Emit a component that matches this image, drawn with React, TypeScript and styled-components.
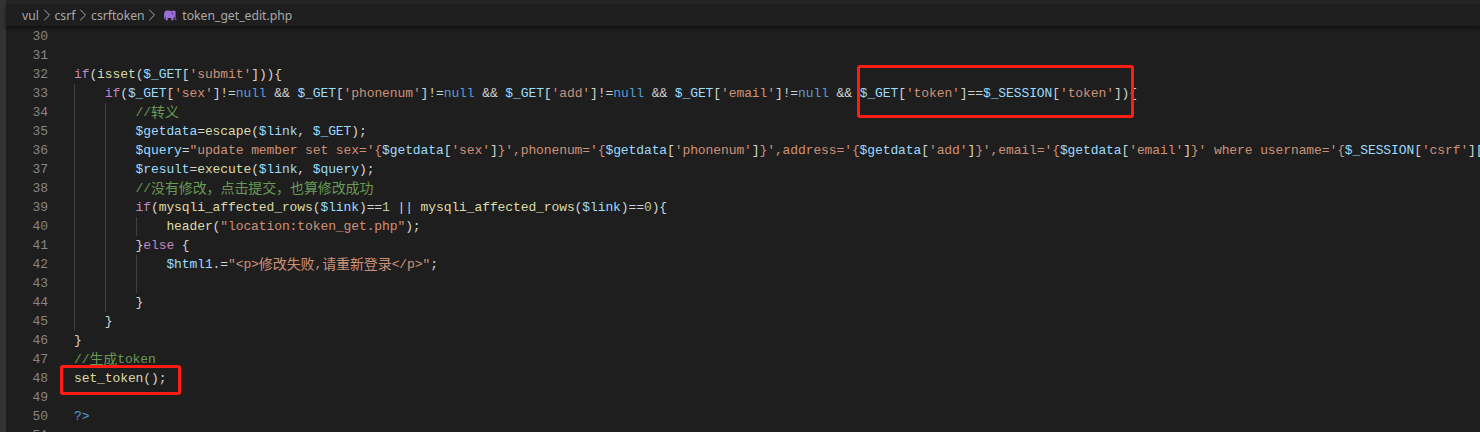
import React from 'react'
import styled, { createGlobalStyle } from 'styled-components'
import { ChevronRight } from 'lucide-react'

type Kind = 'plain' | 'var' | 'str' | 'ctl' | 'fn' | 'kw' | 'num' | 'com'
type Tok = [Kind, string]
type Line = { no: number; indent?: number; toks?: Tok[] }

const COLORS: Record<Kind, string> = {
  plain: '#d4d4d4',
  var: '#9cdcfe',
  str: '#ce9178',
  ctl: '#c586c0',
  fn: '#dcdcaa',
  kw: '#569cd6',
  num: '#b5cea8',
  com: '#6a9955',
}

const get = (key: string): Tok[] => [
  ['var', '$_GET'],
  ['plain', '['],
  ['str', `'${key}'`],
  ['plain', ']'],
]

const notNull = (key: string): Tok[] => [
  ...get(key),
  ['plain', '!='],
  ['kw', 'null'],
  ['plain', ' && '],
]

const interp = (key: string): Tok[] => [
  ['str', '{'],
  ['var', '$getdata'],
  ['plain', '['],
  ['str', `'${key}'`],
  ['plain', ']'],
  ['str', '}'],
]

const LINES: Line[] = [
  { no: 30 },
  { no: 31 },
  {
    no: 32,
    toks: [['ctl', 'if'], ['plain', '('], ['fn', 'isset'], ['plain', '('], ...get('submit'), ['plain', ')){']],
  },
  {
    no: 33,
    indent: 1,
    toks: [
      ['ctl', 'if'],
      ['plain', '('],
      ...notNull('sex'),
      ...notNull('phonenum'),
      ...notNull('add'),
      ...notNull('email'),
      ...get('token'),
      ['plain', '=='],
      ['var', '$_SESSION'],
      ['plain', '['],
      ['str', "'token'"],
      ['plain', ']){'],
    ],
  },
  { no: 34, indent: 2, toks: [['com', '//转义']] },
  {
    no: 35,
    indent: 2,
    toks: [
      ['var', '$getdata'],
      ['plain', '='],
      ['fn', 'escape'],
      ['plain', '('],
      ['var', '$link'],
      ['plain', ', '],
      ['var', '$_GET'],
      ['plain', ');'],
    ],
  },
  {
    no: 36,
    indent: 2,
    toks: [
      ['var', '$query'],
      ['plain', '='],
      ['str', `"update member set sex='`],
      ...interp('sex'),
      ['str', `',phonenum='`],
      ...interp('phonenum'),
      ['str', `',address='`],
      ...interp('add'),
      ['str', `',email='`],
      ...interp('email'),
      ['str', `' where username='{`],
      ['var', '$_SESSION'],
      ['plain', '['],
      ['str', "'csrf'"],
      ['plain', ']['],
      ['str', `'username'`],
      ['plain', ']'],
      ['str', `}'"`],
      ['plain', ';'],
    ],
  },
  {
    no: 37,
    indent: 2,
    toks: [
      ['var', '$result'],
      ['plain', '='],
      ['fn', 'execute'],
      ['plain', '('],
      ['var', '$link'],
      ['plain', ', '],
      ['var', '$query'],
      ['plain', ');'],
    ],
  },
  { no: 38, indent: 2, toks: [['com', '//没有修改，点击提交，也算修改成功']] },
  {
    no: 39,
    indent: 2,
    toks: [
      ['ctl', 'if'],
      ['plain', '('],
      ['fn', 'mysqli_affected_rows'],
      ['plain', '('],
      ['var', '$link'],
      ['plain', ')=='],
      ['num', '1'],
      ['plain', ' || '],
      ['fn', 'mysqli_affected_rows'],
      ['plain', '('],
      ['var', '$link'],
      ['plain', ')=='],
      ['num', '0'],
      ['plain', '){'],
    ],
  },
  {
    no: 40,
    indent: 3,
    toks: [['fn', 'header'], ['plain', '('], ['str', '"location:token_get.php"'], ['plain', ');']],
  },
  { no: 41, indent: 2, toks: [['plain', '}'], ['ctl', 'else'], ['plain', ' {']] },
  {
    no: 42,
    indent: 3,
    toks: [
      ['var', '$html1'],
      ['plain', '.='],
      ['str', '"<p>修改失败,请重新登录</p>"'],
      ['plain', ';'],
    ],
  },
  { no: 43, indent: 3 },
  { no: 44, indent: 2, toks: [['plain', '}']] },
  { no: 45, indent: 1, toks: [['plain', '}']] },
  { no: 46, toks: [['plain', '}']] },
  { no: 47, toks: [['com', '//生成token']] },
  { no: 48, toks: [['fn', 'set_token'], ['plain', '();']] },
  { no: 49 },
  { no: 50, toks: [['kw', '?>']] },
  { no: 51 },
]

const withCjk = (text: string) =>
  text.split(/([\u3000-\u9fff\uff00-\uffef]+)/).map((part, i) =>
    i % 2 ? <Cjk key={i}>{part}</Cjk> : part,
  )

const Elephant = () => (
  <svg width="15" height="11" viewBox="0 0 14 11">
    <path
      fill="#9a6fd6"
      d="M3.600 .6C1.800 .6.600 2 .6 4v4.800h.9V6.400l.6.400v3.400h2.200V8h3.400v2.200h2.200V7.800c.6-.3 1-.7 1.200-1.200v2c0 .8.500 1.400 1.200 1.400.5 0 .9-.3 1.100-.8l-.7-.3c-.1.200-.2.300-.4.300-.2 0-.3-.2-.3-.6V3.600C12.800 1.800 11.600.6 10 .6c-.8 0-1.300.3-1.700.7C7.200.8 5.200.6 3.600.6z"
    />
    <path fill="#6a4a9c" d="M8.600 1.800c-.5.500-.7 1.400-.4 2.300.2.700.7 1.200 1.400 1.400.3-.9.3-2.100-.1-3-.2-.4-.5-.7-.9-.7z" />
  </svg>
)

const App = () => (
  <Page>
    <GlobalStyle />
    <Strip />
    <Main>
      <TabEdge />
      <Breadcrumb>
        <Crumb>vul</Crumb>
        <Chevron />
        <Crumb>csrf</Crumb>
        <Chevron />
        <Crumb>csrftoken</Crumb>
        <Chevron />
        <FileIcon>
          <Elephant />
        </FileIcon>
        <Crumb>token_get_edit.php</Crumb>
      </Breadcrumb>
      <Code>
        {LINES.map((line) => (
          <Row key={line.no}>
            <LineNo>{line.no}</LineNo>
            {Array.from({ length: line.indent ?? 0 }, (_, i) => (
              <Guide key={i} />
            ))}
            <Text>
              {line.toks?.map(([kind, text], i) => (
                <Token key={i} $kind={kind}>
                  {withCjk(text)}
                </Token>
              ))}
            </Text>
          </Row>
        ))}
      </Code>
    </Main>
    <Callout $left={857} $top={65} $width={277} $height={53} />
    <Callout $left={60} $top={365} $width={121} $height={30} />
  </Page>
)

const GlobalStyle = createGlobalStyle`
  html, body {
    margin: 0;
    background: #1e1e1e;
  }
`

const Page = styled.div`
  position: relative;
  display: flex;
  width: 1480px;
  height: 432px;
  overflow: hidden;
  background: #1e1e1e;
`

const Strip = styled.div`
  flex: 0 0 6px;
  background: #333333;
`

const Main = styled.div`
  flex: 1;
  min-width: 0;
  display: flex;
  flex-direction: column;
`

const TabEdge = styled.div`
  flex: 0 0 4px;
  background: #252526;
`

const Breadcrumb = styled.div`
  position: relative;
  z-index: 1;
  flex: 0 0 22px;
  display: flex;
  align-items: center;
  padding-left: 16px;
  background: #1e1e1e;
  box-shadow: 0 2px 4px rgba(0, 0, 0, 0.55);
  color: #a9a9a9;
  font-family: 'Noto Sans', 'Open Sans', sans-serif;
  font-size: 12.2px;
`

const Crumb = styled.span`
  white-space: pre;
`

const Chevron = styled(ChevronRight).attrs({ size: 20, strokeWidth: 1.2 })`
  margin: 0 -2.2px;
  color: #a9a9a9;
`

const FileIcon = styled.span`
  display: flex;
  margin: 0 4px 0 3px;
`

const Code = styled.div`
  padding-top: 1px;
  font-family: 'Liberation Mono', monospace;
  font-size: 13px;
  letter-spacing: -0.1px;
`

const Row = styled.div`
  display: flex;
  height: 19px;
  line-height: 19px;
`

const LineNo = styled.span`
  flex: 0 0 42px;
  margin-right: 26px;
  text-align: right;
  color: #858585;
`

const Guide = styled.span`
  flex: 0 0 30.8px;
  box-sizing: border-box;
  border-left: 1px solid #404040;
`

const Text = styled.span`
  white-space: pre;
`

const Token = styled.span<{ $kind: Kind }>`
  color: ${(p) => COLORS[p.$kind]};
`

const Cjk = styled.span`
  font-family: 'Noto Sans CJK SC', sans-serif;
  font-size: 14px;
  line-height: 1;
  vertical-align: -1px;
`

const Callout = styled.div<{ $left: number; $top: number; $width: number; $height: number }>`
  position: absolute;
  left: ${(p) => p.$left}px;
  top: ${(p) => p.$top}px;
  width: ${(p) => p.$width}px;
  height: ${(p) => p.$height}px;
  box-sizing: border-box;
  border: 3px solid #fe1c14;
  border-radius: 3px;
`

export default App
